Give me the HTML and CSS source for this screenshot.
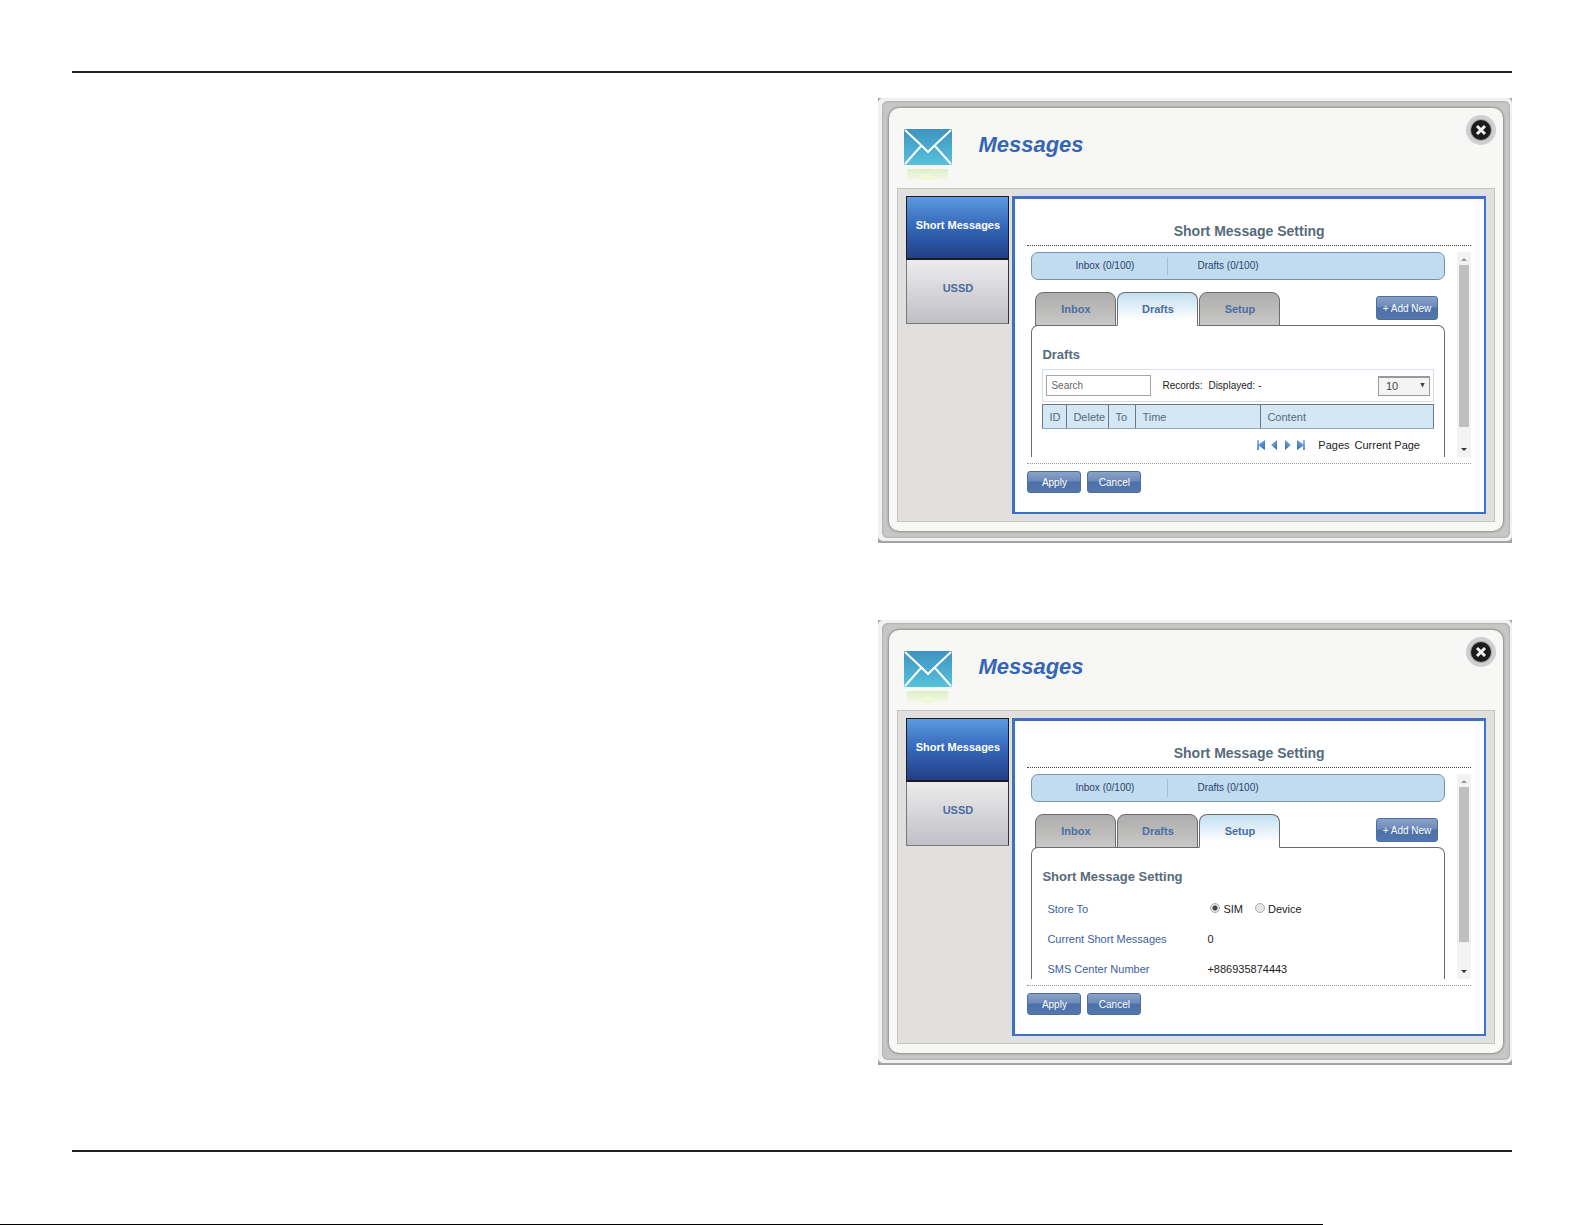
FILE: index.html
```html
<!DOCTYPE html>
<html lang="en">
<head>
    <meta charset="UTF-8">
    <meta name="viewport" content="width=device-width, initial-scale=1.0">
    <title>Messages</title>
    <link rel="stylesheet" href="styles.css">
</head>
<body>
    <!-- shared icons -->
    <svg class="defs" width="0" height="0">
        <defs>
            <linearGradient id="sky" x1="0" y1="0" x2="0" y2="1">
                <stop offset="0" stop-color="#3f93bf"/>
                <stop offset="1" stop-color="#58c1dc"/>
            </linearGradient>
            <linearGradient id="glow" x1="0" y1="0" x2="0" y2="1">
                <stop offset="0" stop-color="#dcf0c4"/>
                <stop offset="1" stop-color="#f3f7ea"/>
            </linearGradient>
            <linearGradient id="arrow" x1="0" y1="0" x2="1" y2="1">
                <stop offset="0" stop-color="#8fc0ee"/>
                <stop offset="1" stop-color="#2c66b4"/>
            </linearGradient>
        </defs>
        <symbol id="envelope" viewBox="0 0 48 52">
            <rect x="0" y="0" width="48" height="36" rx="1" fill="url(#sky)"/>
            <path d="M1 1 L18 17 L24 23 L30 17 L47 1 M17 17 L1 35 M31 17 L47 35" fill="none" stroke="#fff" stroke-width="2"/>
            <rect x="3" y="40" width="41" height="11" rx="2" fill="url(#glow)"/>
            <path d="M13 51 Q24 39 34 51 Z" fill="#f1f8d8"/>
        </symbol>
        <symbol id="cross" viewBox="0 0 30 30">
            <circle cx="15" cy="15" r="15" fill="#cfcfd1"/>
            <circle cx="15" cy="15" r="11" fill="#a9a9ab"/>
            <circle cx="15" cy="15" r="10" fill="#1d1b1c"/>
            <path d="M11 11 L19 19 M19 11 L11 19" stroke="#f0f0f0" stroke-width="3"/>
        </symbol>
        <symbol id="first" viewBox="0 0 9 10">
            <path d="M0 0 H2 V4 L8 0 V10 L2 6 V10 H0 Z" fill="url(#arrow)"/>
        </symbol>
        <symbol id="prev" viewBox="0 0 9 10">
            <path d="M7 0 V10 L1 5 Z" fill="url(#arrow)"/>
        </symbol>
    </svg>

    <main>
        <section class="frame">
            <div class="bezel">
                <div class="rim">
                    <div class="window">
                        <header>
                            <svg class="mail" aria-hidden="true"><use href="#envelope"/></svg>
                            <h1>Messages</h1>
                            <button class="close" type="button" aria-label="Close"><svg width="30" height="30"><use href="#cross"/></svg></button>
                        </header>
                        <div class="workspace">
                            <nav>
                                <a class="current" href="#sms">Short Messages</a>
                                <a href="#ussd">USSD</a>
                            </nav>
                            <form class="content">
                                <h2>Short Message Setting</h2>
                                <div class="scroller">
                                    <div class="view">
                                        <div class="counts">
                                            <span>Inbox (0/100)</span>
                                            <span>Drafts (0/100)</span>
                                        </div>
                                        <div class="tabs">
                                            <button type="button">Inbox</button>
                                            <button class="active" type="button">Drafts</button>
                                            <button type="button">Setup</button>
                                            <button class="blue add" type="button">+ Add New</button>
                                        </div>
                                        <div class="panel">
                                            <h3>Drafts</h3>
                                            <div class="filter">
                                                <input type="text" placeholder="Search" aria-label="Search">
                                                <span>Records:</span>
                                                <span>Displayed: -</span>
                                                <label class="pick">
                                                    <select aria-label="Records per page">
                                                        <option>10</option>
                                                        <option>20</option>
                                                    </select>
                                                </label>
                                            </div>
                                            <table>
                                                <colgroup>
                                                    <col class="id"><col class="delete"><col class="to"><col class="time"><col>
                                                </colgroup>
                                                <tr>
                                                    <th>ID</th>
                                                    <th>Delete</th>
                                                    <th>To</th>
                                                    <th>Time</th>
                                                    <th>Content</th>
                                                </tr>
                                            </table>
                                            <div class="pager">
                                                <svg><use href="#first"/></svg>
                                                <svg><use href="#prev"/></svg>
                                                <svg class="flip"><use href="#prev"/></svg>
                                                <svg class="flip"><use href="#first"/></svg>
                                                <span class="pages">Pages</span>
                                                <span>Current Page</span>
                                            </div>
                                        </div>
                                    </div>
                                    <div class="scrollbar">
                                        <i class="up"></i>
                                        <i class="thumb"></i>
                                        <i class="down"></i>
                                    </div>
                                </div>
                                <footer>
                                    <button class="blue" type="submit">Apply</button>
                                    <button class="blue" type="reset">Cancel</button>
                                </footer>
                            </form>
                        </div>
                    </div>
                </div>
            </div>
        </section>

        <section class="frame">
            <div class="bezel">
                <div class="rim">
                    <div class="window">
                        <header>
                            <svg class="mail" aria-hidden="true"><use href="#envelope"/></svg>
                            <h1>Messages</h1>
                            <button class="close" type="button" aria-label="Close"><svg width="30" height="30"><use href="#cross"/></svg></button>
                        </header>
                        <div class="workspace">
                            <nav>
                                <a class="current" href="#sms">Short Messages</a>
                                <a href="#ussd">USSD</a>
                            </nav>
                            <form class="content">
                                <h2>Short Message Setting</h2>
                                <div class="scroller">
                                    <div class="view">
                                        <div class="counts">
                                            <span>Inbox (0/100)</span>
                                            <span>Drafts (0/100)</span>
                                        </div>
                                        <div class="tabs">
                                            <button type="button">Inbox</button>
                                            <button type="button">Drafts</button>
                                            <button class="active" type="button">Setup</button>
                                            <button class="blue add" type="button">+ Add New</button>
                                        </div>
                                        <div class="panel">
                                            <h3>Short Message Setting</h3>
                                            <dl>
                                                <dt>Store To</dt>
                                                <dd class="store">
                                                    <label><input type="radio" name="store" checked>SIM</label>
                                                    <label><input type="radio" name="store">Device</label>
                                                </dd>
                                                <dt>Current Short Messages</dt>
                                                <dd>0</dd>
                                                <dt>SMS Center Number</dt>
                                                <dd>+886935874443</dd>
                                            </dl>
                                        </div>
                                    </div>
                                    <div class="scrollbar">
                                        <i class="up"></i>
                                        <i class="thumb short"></i>
                                        <i class="down"></i>
                                    </div>
                                </div>
                                <footer>
                                    <button class="blue" type="submit">Apply</button>
                                    <button class="blue" type="reset">Cancel</button>
                                </footer>
                            </form>
                        </div>
                    </div>
                </div>
            </div>
        </section>
    </main>
    <div class="edge"></div>
</body>
</html>
```
FILE: styles.css
```css
* {
    box-sizing: border-box;
}
body {
    margin: 0;
    background: #fff;
    font-family: "Liberation Sans", Arial, sans-serif;
    font-size: 11px;
    color: #222;
}
h1, h2, h3, dl, dd {
    margin: 0;
}
button, input, select {
    font-family: inherit;
    font-size: 10px;
}
svg {
    display: block;
}
.defs {
    position: absolute;
}
main {
    display: flex;
    flex-direction: column;
    align-items: flex-end;
    gap: 77px;
    margin: 71px 73px 0 72px;
    padding: 25px 0 85px;
    border-top: 2px solid #231f20;
    border-bottom: 2px solid #231f20;
}
/* black strip along the bottom of the sheet */
.edge {
    width: 83.5%;
    height: 1px;
    margin-top: 72px;
    background: #000;
}

/* window frame */
.frame {
    width: 44%;
    background: #a5a4a4;
    padding-bottom: 2px;
}
.bezel {
    padding: 3px 2px 3px 4px;
    border-radius: 5px;
    background: #f1f1f1;
}
.rim {
    padding: 7px;
    border-radius: 6px;
    background: #c8c7c6;
    box-shadow: inset 0 0 2px #888;
}
.window {
    padding-bottom: 9px;
    border-radius: 10px;
    background: #f7f7f5;
    box-shadow: 0 0 3px #555;
}
header {
    display: flex;
    height: 80px;
    padding: 0 7px 0 15px;
}
.mail {
    width: 48px;
    height: 52px;
    margin-top: 21px;
}
h1 {
    margin: 25px 0 0 26px;
    font-size: 22px;
    line-height: 24px;
    font-style: italic;
    color: #3565b5;
}
.close {
    width: 30px;
    height: 30px;
    margin: 7px 0 0 auto;
    padding: 0;
    border: none;
    background: none;
    cursor: pointer;
}
.workspace {
    display: flex;
    gap: 3px;
    margin: 0 8px;
    padding: 7px 8px;
    background: #e1e0df;
    border: 1px solid #c3c3c3;
}

/* side menu */
nav {
    width: 103px;
}
nav a {
    display: block;
    height: 64px;
    padding-top: 19px;
    border: 1px solid #77777a;
    border-top: none;
    border-right-color: #333;
    background: linear-gradient(#ececec, #c0bfc6);
    color: #4a6da3;
    font-weight: bold;
    line-height: 18px;
    text-align: center;
    text-decoration: none;
}
nav .current {
    border: 1px solid #1c1c1c;
    border-bottom-width: 2px;
    background: linear-gradient(#5a9add, #3466b9 50%, #233f86);
    color: #fff;
}
.content {
    flex: 1;
    min-width: 0;
    padding: 22px 13px 19px 12px;
    background: #fff;
    border: solid #3e70c4;
    border-width: 3px 2px 2px 3px;
}
h2 {
    padding-bottom: 4px;
    border-bottom: 1px dotted #444;
    color: #566b7b;
    font-size: 14px;
    line-height: 20px;
    text-align: center;
}

/* scrolling area */
.scroller {
    display: flex;
    gap: 12px;
    height: 205px;
    margin: 6px 0;
    padding-left: 4px;
}
.view {
    flex: 1;
    display: flex;
    flex-direction: column;
    overflow: hidden;
}
.scrollbar {
    width: 14px;
    background: #f3f3f3;
}
.scrollbar i {
    display: block;
    margin: 0 auto;
}
.up, .down {
    width: 6px;
    height: 3px;
    background: #999;
    clip-path: polygon(50% 0, 100% 100%, 0 100%);
}
.scrollbar .up {
    margin-top: 6px;
}
.thumb {
    width: 10px;
    height: 162px;
    background: #bfbfbe;
}
.scrollbar .thumb {
    margin-top: 4px;
}
.thumb.short {
    height: 155px;
}
.scrollbar .down {
    margin-top: 21px;
    background: #333;
    clip-path: polygon(0 0, 100% 0, 50% 100%);
}
.scrollbar .short + .down {
    margin-top: 28px;
}
.counts {
    display: flex;
    flex-shrink: 0;
    align-items: center;
    height: 28px;
    border: 1px solid #7991ab;
    border-radius: 7px;
    background: #c2dcef;
    color: #2f3f6e;
    font-size: 10px;
    line-height: 18px;
}
.counts span {
    padding: 0 29px;
}
.counts span:first-child {
    width: 136px;
    padding: 0 0 0 43px;
    border-right: 1px solid #a3bdd8;
}

/* tabs */
.tabs {
    display: flex;
    flex-shrink: 0;
    gap: 1px;
    padding: 12px 7px 0 4px;
    margin-bottom: -1px;
    position: relative;
}
.tabs button {
    width: 81px;
    height: 34px;
    padding: 0;
    border: 1px solid #6b6c70;
    border-radius: 8px 8px 0 0;
    background: linear-gradient(#adadad, #c9c8c6);
    color: #4a6da3;
    font-size: 11px;
    font-weight: bold;
}
.tabs .active {
    border-bottom-color: #fff;
    background: linear-gradient(#c2dff1, #fff 85%);
}
.blue, .tabs .add {
    width: 54px;
    height: 22px;
    padding: 0;
    border: 1px solid #4d6ea3;
    border-radius: 3px;
    background: linear-gradient(#8aa2c8, #6c8bba 45%, #4c70a7 50%, #5478ad);
    color: #fff;
    font-size: 10px;
    font-weight: normal;
}
.tabs .add {
    width: 62px;
    height: 24px;
    margin: 4px 0 0 auto;
}
.panel {
    flex: 1 0 auto;
    padding: 19px 10px 0;
    border: 1px solid #6b6c70;
    border-bottom: none;
    border-radius: 7px 7px 0 0;
}
h3 {
    color: #566b7b;
    font-size: 13px;
    line-height: 20px;
}

/* drafts list */
.filter {
    display: flex;
    align-items: center;
    height: 33px;
    margin: 4px 0 2px;
    padding: 0 3px;
    border: 1px solid #d5dfea;
    font-size: 10px;
}
.filter input {
    width: 105px;
    height: 21px;
    padding: 0 4px;
    border: 1px solid #a5a5a5;
}
.filter input::placeholder {
    color: #666;
}
.filter span {
    margin-left: 6px;
}
.filter input + span {
    margin-left: 11px;
}
.pick {
    position: relative;
    margin-left: auto;
}
.pick select {
    display: block;
    width: 52px;
    height: 20px;
    padding: 0 7px;
    appearance: none;
    border: 1px solid #999;
    border-top-width: 2px;
    border-radius: 0;
    background: #f4f4f4;
    color: #444;
    font-size: 11px;
}
.pick::after {
    content: "";
    position: absolute;
    top: 7px;
    right: 5px;
    width: 5px;
    height: 5px;
    background: #444;
    clip-path: polygon(0 0, 100% 0, 50% 100%);
}
table {
    width: 100%;
    table-layout: fixed;
    border-collapse: collapse;
}
.id { width: 24px; }
.delete { width: 42px; }
.to { width: 27px; }
.time { width: 125px; }
th {
    height: 24px;
    padding: 0 6px;
    border: 1px solid #6f7780;
    border-bottom-color: #8fa5bd;
    background: #d4e7f5;
    color: #566b7b;
    font-weight: normal;
    text-align: left;
}
.pager {
    display: flex;
    justify-content: flex-end;
    align-items: center;
    gap: 4px;
    height: 32px;
    padding-right: 14px;
}
.pager svg {
    width: 9px;
    height: 10px;
}
.pager .flip {
    transform: scaleX(-1);
}
.pages {
    margin: 0 1px 0 9px;
}

/* setup form */
dl {
    display: grid;
    grid-template-columns: 160px 1fr;
    margin-top: 7px;
    padding-left: 5px;
    line-height: 30px;
}
dt {
    color: #3d5f9c;
}
dd, .store label {
    display: flex;
    align-items: center;
}
.store {
    gap: 12px;
    padding-left: 3px;
}
input[type="radio"] {
    width: 10px;
    height: 10px;
    margin: 0 3px 2px 0;
    appearance: none;
    border: 1px solid #aaa;
    border-radius: 50%;
    background: #e6e6e6;
}
input[type="radio"]:checked {
    background: radial-gradient(#444 2px, #e6e6e6 3px);
}
.content footer {
    display: flex;
    gap: 6px;
    padding-top: 7px;
    border-top: 1px dotted #999;
}
```
